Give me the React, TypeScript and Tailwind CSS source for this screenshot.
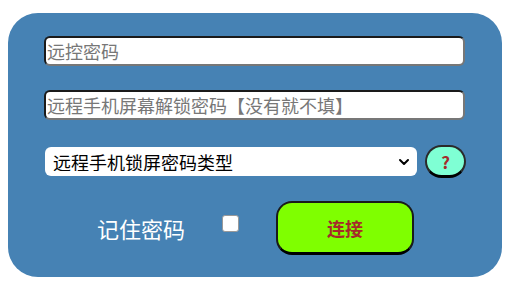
import { ChevronDown } from "lucide-react";

const font = { fontFamily: '"Noto Sans CJK SC", "Liberation Sans", sans-serif' };

export default function App() {
  return (
    <div className="w-[514px] h-[295px] bg-white pt-[13px] pl-[8px]" style={font}>
      <div className="w-[494px] h-[264px] rounded-[30px] bg-[#4682b4] pl-[36px] pt-[23px] flex flex-col">
        {/* password fields */}
        <input
          type="password"
          placeholder="远控密码"
          className="w-[421px] h-[30px] rounded-[6px] bg-white border-2 border-t-[#1a1a1a] border-l-[#1a1a1a] border-r-[#777] border-b-[#777] px-[1px] text-[18px] leading-none placeholder:text-[#777] outline-none"
        />
        <input
          type="password"
          placeholder="远程手机屏幕解锁密码【没有就不填】"
          className="mt-[24px] w-[421px] h-[30px] rounded-[6px] bg-white border-2 border-t-[#1a1a1a] border-l-[#1a1a1a] border-r-[#777] border-b-[#777] px-[1px] text-[18px] leading-none placeholder:text-[#777] outline-none"
        />

        {/* lock type */}
        <div className="mt-[25px] flex items-center gap-[8px]">
          <div className="relative w-[372px] h-[29px] ml-[1px]">
            <select className="appearance-none w-full h-full rounded-[6px] bg-white pl-[8px] text-[18px] leading-none text-black outline-none">
              <option>远程手机锁屏密码类型</option>
            </select>
            <ChevronDown className="absolute right-[5px] top-[7px] w-[16px] h-[16px] text-black pointer-events-none" strokeWidth={3} />
          </div>
          <button className="w-[41px] h-[33px] rounded-[17px] bg-[#7fffd4] border-2 border-[#2a2a2a] border-b-[3px] border-b-black text-[#a52a2a] font-bold text-[17px] leading-none">
            ?
          </button>
        </div>

        {/* remember + connect */}
        <div className="mt-[23px] flex items-center">
          <span className="ml-[53px] text-white text-[22px] leading-none">记住密码</span>
          <input
            type="checkbox"
            className="ml-[37px] appearance-none w-[17px] h-[17px] rounded-[3px] bg-white border border-[#999] -mt-[10px]"
          />
          <button className="ml-[37px] w-[138px] h-[54px] rounded-[16px] bg-[#7fff00] border-2 border-[#1a1a1a] border-b-[3px] border-b-black text-[#a52a2a] font-bold text-[18px] leading-none">
            连接
          </button>
        </div>
      </div>
    </div>
  );
}
